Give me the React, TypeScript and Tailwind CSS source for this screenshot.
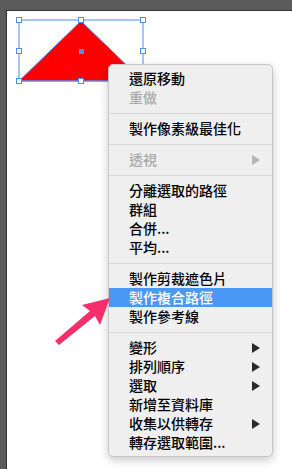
import React from 'react';

type Item =
  | { kind: 'sep' }
  | { kind: 'item'; label: string; disabled?: boolean; submenu?: boolean; active?: boolean };

const items: Item[] = [
  { kind: 'item', label: '還原移動' },
  { kind: 'item', label: '重做', disabled: true },
  { kind: 'sep' },
  { kind: 'item', label: '製作像素級最佳化' },
  { kind: 'sep' },
  { kind: 'item', label: '透視', disabled: true, submenu: true },
  { kind: 'sep' },
  { kind: 'item', label: '分離選取的路徑' },
  { kind: 'item', label: '群組' },
  { kind: 'item', label: '合併...' },
  { kind: 'item', label: '平均...' },
  { kind: 'sep' },
  { kind: 'item', label: '製作剪裁遮色片' },
  { kind: 'item', label: '製作複合路徑', active: true },
  { kind: 'item', label: '製作參考線' },
  { kind: 'sep' },
  { kind: 'item', label: '變形', submenu: true },
  { kind: 'item', label: '排列順序', submenu: true },
  { kind: 'item', label: '選取', submenu: true },
  { kind: 'item', label: '新增至資料庫' },
  { kind: 'item', label: '收集以供轉存', submenu: true },
  { kind: 'item', label: '轉存選取範圍...' },
];

const Handle = ({ x, y }: { x: number; y: number }) => (
  <rect x={x - 2.5} y={y - 2.5} width={5} height={5} fill="#fff" stroke="#4b8ef5" strokeWidth={1} />
);

const ContextMenu = () => (
  <div
    className="absolute left-[101px] top-[53px] w-[165px] py-[4px] rounded-[5px] bg-[#efefef] border border-[#c6c6c6] shadow-[0_3px_10px_rgba(0,0,0,0.22)]"
    style={{ fontFamily: '"Noto Sans CJK TC", "Noto Sans", sans-serif' }}
  >
    {items.map((it, i) =>
      it.kind === 'sep' ? (
        <div key={i} className="h-[12px] flex items-center">
          <div className="w-full h-px bg-[#d9d9d9]" />
        </div>
      ) : (
        <div
          key={i}
          className={`h-[19px] flex items-center justify-between pl-[20px] pr-[12px] text-[14px] leading-[19px] font-medium ${
            it.active ? 'bg-[#4a98f5] text-white' : it.disabled ? 'text-[#a9a9a9]' : 'text-black'
          }`}
        >
          <span>{it.label}</span>
          {it.submenu && (
            <svg width="8" height="10" viewBox="0 0 8 10">
              <polygon points="0,0 8,5 0,10" fill={it.disabled ? '#b4b4b4' : '#2a2a2a'} />
            </svg>
          )}
        </div>
      )
    )}
  </div>
);

export default function App() {
  return (
    <div className="w-[292px] h-[469px] bg-[#5b5b5b] pt-[10px] pl-[6px] overflow-hidden">
      <div className="relative w-full h-full bg-white border-t border-l border-[#333]">
        {/* artwork: triangle with selection box */}
        <svg className="absolute left-0 top-0" width="286" height="459" viewBox="7 11 286 459">
          <polygon points="19,81 81,21 143,81" fill="#ff0000" stroke="#4b8ef5" strokeWidth={1} />
          <rect x={19} y={20} width={124} height={61} fill="none" stroke="#4b8ef5" strokeWidth={1} />
          <Handle x={19} y={20} />
          <Handle x={81} y={20} />
          <Handle x={143} y={20} />
          <Handle x={19} y={51} />
          <Handle x={143} y={51} />
          <Handle x={19} y={81} />
          <Handle x={81} y={81} />
          <Handle x={143} y={81} />
          <rect x={79} y={49} width={5} height={5} fill="#4b8ef5" />
        </svg>

        <ContextMenu />

        {/* pink annotation arrow */}
        <svg className="absolute left-0 top-0 pointer-events-none" width="286" height="459" viewBox="7 11 286 459">
          <polygon points="110,298 100,325 95,316 59,345 55,341 90,311 82,305" fill="#f72e6c" />
        </svg>
      </div>
    </div>
  );
}
